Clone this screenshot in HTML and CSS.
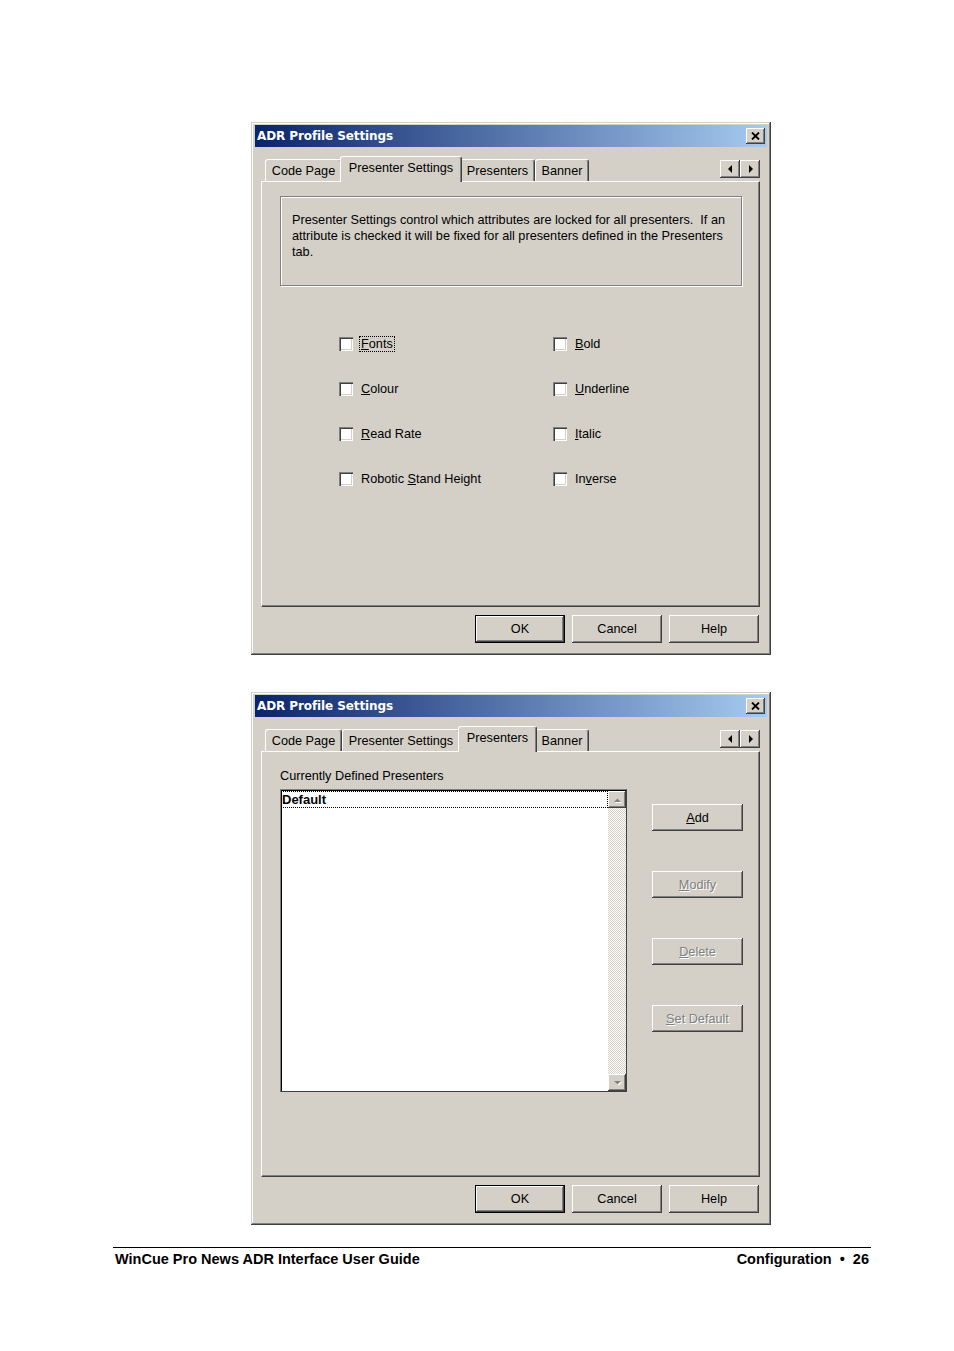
FILE: index.html
```html
<!DOCTYPE html>
<html>
<head>
<meta charset="utf-8">
<title>ADR Profile Settings</title>
<link rel="stylesheet" href="styles.css">
</head>
<body>
<div class="page">

  <div class="window">
    <div class="titlebar">
      <span class="title">ADR Profile Settings</span>
      <div class="close"><svg width="9" height="8" viewBox="0 0 9 8"><path d="M1 0.5 L8 7.5 M8 0.5 L1 7.5" stroke="#000" stroke-width="1.8" fill="none"/></svg></div>
    </div>
    <div class="client">
      <div class="tabrow">
        <div class="tabs">
          <div class="tab t-cp">Code Page</div>
          <div class="tab t-ps sel">Presenter Settings</div>
          <div class="tab t-p">Presenters</div>
          <div class="tab t-b">Banner</div>
        </div>
        <div class="spin">
          <div class="sbtn"><svg width="5" height="8" viewBox="0 0 5 8"><path d="M4 0 L0 4 L4 8 Z" fill="#000"/></svg></div>
          <div class="sbtn"><svg width="5" height="8" viewBox="0 0 5 8"><path d="M1 0 L5 4 L1 8 Z" fill="#000"/></svg></div>
        </div>
      </div>
      <div class="panel">
        <div class="group">Presenter Settings control which attributes are locked for all presenters.&nbsp; If an attribute is checked it will be fixed for all presenters defined in the Presenters tab.</div>
        <div class="checks">
          <div class="cb"><span class="box"></span><span class="focus"><u>F</u>onts</span></div>
          <div class="cb"><span class="box"></span><span><u>B</u>old</span></div>
          <div class="cb"><span class="box"></span><span><u>C</u>olour</span></div>
          <div class="cb"><span class="box"></span><span><u>U</u>nderline</span></div>
          <div class="cb"><span class="box"></span><span><u>R</u>ead Rate</span></div>
          <div class="cb"><span class="box"></span><span><u>I</u>talic</span></div>
          <div class="cb"><span class="box"></span><span>Robotic <u>S</u>tand Height</span></div>
          <div class="cb"><span class="box"></span><span>In<u>v</u>erse</span></div>
        </div>
      </div>
      <div class="btnrow">
        <div class="btn def">OK</div>
        <div class="btn">Cancel</div>
        <div class="btn">Help</div>
      </div>
    </div>
  </div>

  <div class="window second">
    <div class="titlebar">
      <span class="title">ADR Profile Settings</span>
      <div class="close"><svg width="9" height="8" viewBox="0 0 9 8"><path d="M1 0.5 L8 7.5 M8 0.5 L1 7.5" stroke="#000" stroke-width="1.8" fill="none"/></svg></div>
    </div>
    <div class="client">
      <div class="tabrow">
        <div class="tabs">
          <div class="tab t-cp">Code Page</div>
          <div class="tab t-ps">Presenter Settings</div>
          <div class="tab t-p sel">Presenters</div>
          <div class="tab t-b">Banner</div>
        </div>
        <div class="spin">
          <div class="sbtn"><svg width="5" height="8" viewBox="0 0 5 8"><path d="M4 0 L0 4 L4 8 Z" fill="#000"/></svg></div>
          <div class="sbtn"><svg width="5" height="8" viewBox="0 0 5 8"><path d="M1 0 L5 4 L1 8 Z" fill="#000"/></svg></div>
        </div>
      </div>
      <div class="panel">
        <div class="pres">
          <div class="pres-left">
            <div class="plabel">Currently Defined Presenters</div>
            <div class="listbox">
              <div class="items">
                <div class="item">Default</div>
              </div>
              <div class="vscroll">
                <div class="sb-btn"><svg width="9" height="6" viewBox="0 0 9 6"><path d="M1 5 L4.5 1.5 L8 5 Z" fill="#fff" transform="translate(1 1)"/><path d="M1 5 L4.5 1.5 L8 5 Z" fill="#808080"/></svg></div>
                <div class="track"></div>
                <div class="sb-btn"><svg width="9" height="6" viewBox="0 0 9 6"><path d="M1 1 L4.5 4.5 L8 1 Z" fill="#fff" transform="translate(1 1)"/><path d="M1 1 L4.5 4.5 L8 1 Z" fill="#808080"/></svg></div>
              </div>
            </div>
          </div>
          <div class="pres-right">
            <div class="btn side"><span><u>A</u>dd</span></div>
            <div class="btn side dis"><span><u>M</u>odify</span></div>
            <div class="btn side dis"><span><u>D</u>elete</span></div>
            <div class="btn side dis"><span><u>S</u>et Default</span></div>
          </div>
        </div>
      </div>
      <div class="btnrow">
        <div class="btn def">OK</div>
        <div class="btn">Cancel</div>
        <div class="btn">Help</div>
      </div>
    </div>
  </div>

  <div class="footer">
    <span>WinCue Pro News ADR Interface User Guide</span>
    <span>Configuration &nbsp;•&nbsp; 26</span>
  </div>

</div>
</body>
</html>
```

FILE: styles.css
```css
html, body {
  margin: 0;
  padding: 0;
  background: #fff;
}

.page {
  display: flex;
  flex-direction: column;
  align-items: flex-start;
  padding-top: 122px;
  font-family: "Liberation Sans", Arial, sans-serif;
  font-size: 12.7px;
  color: #000;
}

.window {
  margin-left: 251px;
  width: 520px;
  height: 533px;
  box-sizing: border-box;
  padding: 3px 4px;
  background: #d4d0c8;
  box-shadow: inset -1px -1px #404040, inset 1px 1px #d4d0c8, inset -2px -2px #808080, inset 2px 2px #fff;
  display: flex;
  flex-direction: column;
}

.window.second {
  margin-top: 37px;
}

.titlebar {
  height: 22px;
  flex: none;
  background: linear-gradient(to right, #0a246a, #a6caf0);
  display: flex;
  align-items: center;
  justify-content: space-between;
  padding: 0 2px 0 2px;
}

.title {
  color: #fff;
  font-family: "DejaVu Sans", Verdana, sans-serif;
  font-weight: bold;
  font-size: 12px;
  letter-spacing: -0.1px;
}

.close {
  width: 19px;
  height: 16px;
  box-sizing: border-box;
  background: #d4d0c8;
  box-shadow: inset -1px -1px #404040, inset 1px 1px #fff, inset -2px -2px #808080;
  display: flex;
  align-items: center;
  justify-content: center;
}

.client {
  flex: 1;
  display: flex;
  flex-direction: column;
  padding: 9px 7px 9px 6px;
}

.tabrow {
  height: 25px;
  flex: none;
  display: flex;
  align-items: flex-end;
  justify-content: space-between;
  position: relative;
  z-index: 1;
}

.tabs {
  display: flex;
  align-items: flex-end;
  padding-left: 4px;
}

.tab {
  height: 22px;
  box-sizing: border-box;
  background: #d4d0c8;
  border-top: 1px solid #fff;
  border-left: 1px solid #fff;
  border-right: 1px solid #404040;
  border-radius: 3px 3px 0 0;
  box-shadow: inset -1px 0 #808080;
  display: flex;
  align-items: center;
  justify-content: center;
  padding-top: 1px;
  white-space: nowrap;
}

.t-cp { width: 77px; }
.t-ps { width: 118px; }
.t-p { width: 75px; }
.t-b { width: 54px; }

.tab.sel {
  height: 26px;
  margin: 0 -2px -1px;
  padding: 0 0 3px;
  position: relative;
}
.t-ps.sel { width: 122px; }
.t-p.sel { width: 79px; }

.spin {
  display: flex;
  margin-bottom: 3px;
}

.sbtn {
  width: 20px;
  height: 18px;
  box-sizing: border-box;
  background: #d4d0c8;
  box-shadow: inset -1px -1px #404040, inset 1px 1px #fff, inset -2px -2px #808080;
  display: flex;
  align-items: center;
  justify-content: center;
}

.panel {
  height: 426px;
  flex: none;
  box-sizing: border-box;
  border-top: 1px solid #fff;
  border-left: 1px solid #fff;
  border-right: 1px solid #404040;
  border-bottom: 1px solid #404040;
  box-shadow: inset -1px -1px #808080;
}

.group {
  margin: 14px 17px 0 18px;
  height: 90px;
  box-sizing: border-box;
  border: 1px solid #808080;
  box-shadow: inset 1px 1px #fff, 1px 1px #fff;
  padding: 15px 8px 0 11px;
  line-height: 16px;
}

.checks {
  display: grid;
  grid-template-columns: 214px 214px;
  grid-auto-rows: 14px;
  row-gap: 31px;
  margin: 51px 0 0 77px;
}

.cb {
  display: flex;
  align-items: center;
  gap: 8px;
  white-space: nowrap;
}

.box {
  width: 14px;
  height: 14px;
  flex: none;
  box-sizing: border-box;
  background: #fff;
  box-shadow: inset 1px 1px #808080, inset 2px 2px #404040, inset -1px -1px #fff, inset -2px -2px #d4d0c8;
}

.focus {
  outline: 1px dotted #000;
  outline-offset: 0;
  padding: 0 1px;
  margin-left: -1px;
}

.btnrow {
  display: flex;
  justify-content: flex-end;
  gap: 7px;
  margin-top: 8px;
  padding-right: 1px;
}

.btn {
  width: 90px;
  height: 28px;
  box-sizing: border-box;
  background: #d4d0c8;
  box-shadow: inset -1px -1px #404040, inset 1px 1px #fff, inset -2px -2px #808080;
  display: flex;
  align-items: center;
  justify-content: center;
}

.btn.def {
  border: 1px solid #000;
}

.pres {
  display: flex;
  gap: 25px;
  padding: 16px 0 0 18px;
}

.plabel {
  line-height: 16px;
  height: 16px;
}

.listbox {
  margin-top: 5px;
  width: 347px;
  height: 303px;
  box-sizing: border-box;
  border: 1px solid;
  border-color: #808080 #404040 #404040 #808080;
  box-shadow: inset 1px 1px #000;
  background: #fff;
  display: flex;
  padding: 1px 0 0 1px;
}

.items {
  flex: 1;
}

.item {
  height: 17px;
  box-sizing: border-box;
  border: 1px dotted #000;
  font-weight: bold;
  font-size: 13px;
  line-height: 15px;
  padding-left: 0;
  margin-left: -1px;
}

.vscroll {
  width: 18px;
  display: flex;
  flex-direction: column;
  background: repeating-conic-gradient(#d4d0c8 0 25%, #fff 0 50%) 0 0 / 2px 2px;
}

.sb-btn {
  height: 17px;
  flex: none;
  box-sizing: border-box;
  background: #d4d0c8;
  box-shadow: inset -1px -1px #404040, inset 1px 1px #fff, inset -2px -2px #808080;
  display: flex;
  align-items: center;
  justify-content: center;
}

.track {
  flex: 1;
}

.pres-right {
  display: flex;
  flex-direction: column;
  gap: 40px;
  padding-top: 36px;
}

.btn.side {
  width: 91px;
  height: 27px;
}

.btn.dis {
  color: #808080;
  text-shadow: 1px 1px #fff;
}

.footer {
  margin: 22px 0 0 113px;
  width: 758px;
  box-sizing: border-box;
  border-top: 1px solid #000;
  display: flex;
  justify-content: space-between;
  padding: 3px 2px 0 2px;
  font-family: "Liberation Sans", Arial, sans-serif;
  font-weight: bold;
  font-size: 14.5px;
}
```
